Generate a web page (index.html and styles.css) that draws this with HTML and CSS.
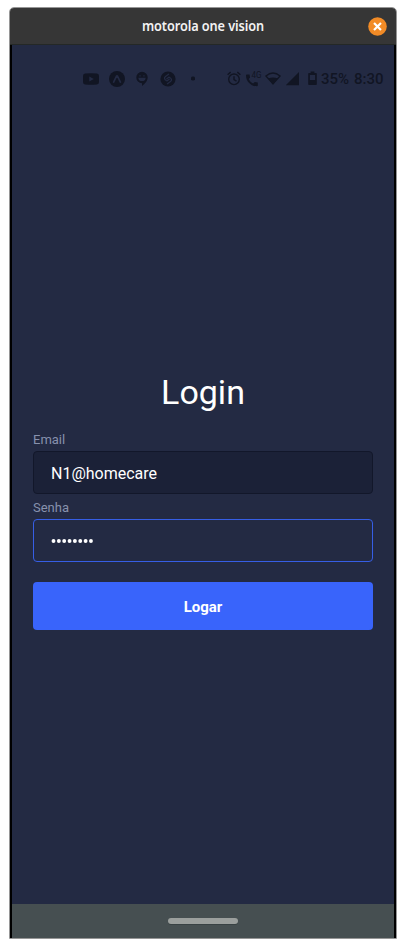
FILE: index.html
```html
<!DOCTYPE html>
<html lang="pt-BR">
<head>
<meta charset="utf-8">
<title>motorola one vision</title>
<link rel="stylesheet" href="styles.css">
</head>
<body>
<div class="window">
  <header class="titlebar">
    <span class="title">motorola one vision</span>
    <button class="close" aria-label="Fechar"><svg width="19" height="19" viewBox="0 0 19 19"><circle cx="9.5" cy="9.5" r="9.3" fill="#f28b26"/><path d="M6.800 6.800l5.400 5.400M12.200 6.800l-5.400 5.400" stroke="#fff" stroke-width="2.200" stroke-linecap="square"/></svg></button>
  </header>
  <div class="device">
    <div class="screen">
      <div class="status">
        <div class="notifications">
          <svg width="16" height="16" viewBox="0 0 16 16"><path fill-rule="evenodd" d="M2 2.500Q8 1.900 14 2.500Q16 2.600 16 5v6q0 2.400-2 2.500Q8 14.100 2 13.500Q0 13.400 0 11V5Q0 2.600 2 2.500M6.300 5.500v5L10.800 8z"/></svg>
          <svg width="16" height="16" viewBox="0 0 16 16"><circle cx="8" cy="8" r="8"/><path class="cut" d="M4.600 11.100L7.500 5.100q.5-.6 1 0l2.900 6" stroke-width="1.700" stroke-linecap="round"/></svg>
          <svg width="12" height="16" viewBox="0 0 12 16"><path d="M6 .800a5.700 5.700 0 0 1 5.700 5.700c0 3-2.300 6-5.700 8.500v-2.800A5.700 5.700 0 1 1 6 .800"/><path class="cutfill" d="M2.300 6.700h7.400q-.2 3.400-3.700 3.400T2.300 6.700"/><path class="cut" d="M3.300 4.900h1.500M7.200 4.900h1.500"/></svg>
          <svg width="16" height="16" viewBox="0 0 16 16"><circle cx="8" cy="8" r="7.600"/><path class="cut" d="M6.700 9.800C4.300 8.500 3.800 6.700 5.500 5.500L8.600 3.300M9.300 6.200c2.400 1.300 2.900 3.100 1.200 4.300l-3.100 2.200M6.800 7.700L8.800 6.200M7.200 9.800l2-1.500" stroke-width="1.300" stroke-linecap="round"/></svg>
          <svg width="4" height="16" viewBox="0 0 4 16"><circle cx="2" cy="7.500" r="2.100"/></svg>
        </div>
        <div class="system">
          <svg class="alarm" width="14" height="16" viewBox="0 0 14 16"><g fill="none" stroke="#111523" stroke-width="1.400"><circle cx="7" cy="8.300" r="5.300"/><path d="M.6 3.700L3.700 1.100M13.400 3.700L10.300 1.100M7 5.200v3.400l2.500 1.500"/></g></svg>
          <svg class="phone" width="16" height="16" viewBox="0 0 16 16"><path d="M.8 3.500h2.700l.6 3-1.500 1.600q1.500 3.100 4.500 4.500l1.700-1.600 3 .6v2.900q0 .8-1 .8C4.800 15 0 10.200 0 4.400q0-.9.800-.9"/><text x="5.400" y="7.100" textLength="10" lengthAdjust="spacingAndGlyphs">4G</text></svg>
          <svg class="wifi" width="16" height="16" viewBox="0 0 16 16"><path d="M.9 5Q8-1 15.100 5L8 12.800z" fill="none" stroke="#111523" stroke-width="1.300"/><path d="M3 7.400Q8 5.400 13 7.400L8 13.500z"/></svg>
          <svg class="signal" width="14" height="16" viewBox="0 0 14 16"><path d="M13 1v13.200H-.2z"/></svg>
          <svg class="battery" width="9" height="16" viewBox="0 0 9 16"><path fill-rule="evenodd" d="M2.600.5h3.800V2H8q.8 0 .8.800v10.500q0 .8-.8.800H1q-.8 0-.8-.8V2.800Q.2 2 1 2h1.600zM1.900 4v5h5.200V4z"/></svg>
          <span class="percent">35%</span>
          <span class="time">8:30</span>
        </div>
      </div>
      <main class="login">
        <h1>Login</h1>
        <label for="email">Email</label>
        <input id="email" type="text" value="N1@homecare">
        <label>Senha</label>
        <div class="field"><svg class="dots" width="44" height="6" viewBox="0 0 44 6"><circle cx="2.500" cy="3" r="1.950"/><circle cx="7.850" cy="3" r="1.950"/><circle cx="13.200" cy="3" r="1.950"/><circle cx="18.550" cy="3" r="1.950"/><circle cx="23.900" cy="3" r="1.950"/><circle cx="29.250" cy="3" r="1.950"/><circle cx="34.600" cy="3" r="1.950"/><circle cx="39.950" cy="3" r="1.950"/></svg></div>
        <button class="submit">Logar</button>
      </main>
    </div>
    <div class="nav"><span class="handle"></span></div>
  </div>
</div>
</body>
</html>
```
FILE: styles.css
```css
* { box-sizing: border-box; }
body { margin: 0; padding: 7px 9px 9px; width: 406px; height: 948px; background: #fff; font-family: Roboto, sans-serif; overflow: hidden; }
button { font: inherit; border: 0; padding: 0; background: none; }
svg { display: block; flex: none; fill: #111523; }
.window { width: 388px; height: 932px; border: 1px solid #969696; border-radius: 5px 5px 0 0; overflow: hidden; display: flex; flex-direction: column; }
.titlebar { height: 37px; flex: none; background: #363636; border-bottom: 1px solid #242826; display: grid; grid-template-columns: 28px 1fr 28px; align-items: center; }
.title { grid-column: 2; text-align: center; font: 600 14px/20px "Noto Sans", sans-serif; letter-spacing: -.1px; color: #f2f2f2; white-space: nowrap; transform: scaleX(.91); }
.close { width: 19px; height: 19px; }
.device { flex: 1; padding: 0 2px; background: #000; display: flex; flex-direction: column; }
.screen { flex: 1; background: #232a43; }
.status { height: 68px; padding: 26px 10px 0 71px; display: flex; justify-content: space-between; align-items: flex-start; }
.notifications { display: flex; gap: 10px; }
.notifications svg:nth-child(3) { margin-left: 1px; }
.notifications svg:nth-child(4) { margin-left: 1.5px; }
.notifications svg:nth-child(5) { margin-left: 5.5px; }
.cut { fill: none; stroke: #232a43; }
.cutfill { fill: #232a43; }
.system { display: flex; color: #111523; font-weight: 500; font-size: 15px; line-height: 17px; white-space: nowrap; }
.alarm { margin-right: 5px; }
.phone { margin-right: 3px; }
.phone text { font: 8.5px Roboto, sans-serif; }
.wifi { margin-right: 5px; }
.signal { margin-right: 8px; }
.battery { margin-right: 4px; }
.percent { width: 33px; }
.time { width: 30px; }
.login { padding: 259px 21px 0; display: flex; flex-direction: column; }
h1 { margin: 0 0 20px; font-weight: 400; font-size: 34px; line-height: 40px; text-align: center; color: #fff; }
label { font-size: 13px; line-height: 16px; margin-bottom: 3px; color: #8791ad; }
input, .field { width: 340px; height: 43px; border: 1px solid #12172a; border-radius: 4px; padding: 0 17px; background: #1b2137; color: #fff; font: 16px Roboto, sans-serif; }
input { margin-bottom: 6px; outline: 0; padding-top: 1px; }
.field { border-color: #365ee5; background: #232a43; display: flex; align-items: center; }
.dots { fill: #fff; }
.submit { height: 48px; margin-top: 20px; padding-top: 2px; border-radius: 4px; background: #3964fb; color: #fff; font-weight: 700; font-size: 15px; }
.nav { height: 34px; background: #464f51; display: flex; align-items: center; justify-content: center; }
.handle { width: 70px; height: 6px; border-radius: 3px; background: #9b9f9d; box-shadow: 0 1px #394244; }
```
